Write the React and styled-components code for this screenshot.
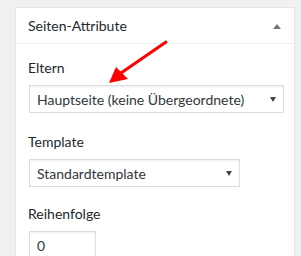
import React from "react";
import styled, { createGlobalStyle } from "styled-components";

const Global = createGlobalStyle`
  html, body { margin: 0; padding: 0; background: #f1f1f1; }
  body { font-family: Lato, "Open Sans", sans-serif; color: #23282d; }
`;

const Page = styled.div`
  position: relative;
  padding: 7px 0 0 15px;
  height: 256px;
  box-sizing: border-box;
  overflow: hidden;
`;

const Box = styled.div`
  width: 280px;
  box-sizing: border-box;
  background: #fff;
  border: 1px solid #e5e5e5;
  box-shadow: 0 1px 1px rgba(0, 0, 0, 0.04);
  height: 260px;
`;

const Header = styled.div`
  display: flex;
  align-items: center;
  justify-content: space-between;
  height: 35px;
  padding: 0 13px 0 12px;
  border-bottom: 1px solid #eee;
`;

const Title = styled.h2`
  margin: 0;
  font-size: 14px;
  font-weight: 400;
  line-height: 1.4;
  color: #23282d;
`;

const Toggle = styled.span`
  width: 0;
  height: 0;
  border-left: 4px solid transparent;
  border-right: 4px solid transparent;
  border-bottom: 5px solid #72777c;
  margin-top: 1px;
`;

const Body = styled.div`
  display: flex;
  flex-direction: column;
  padding: 14px 12px 0 12px;
`;

const Label = styled.label`
  font-size: 14px;
  line-height: 20px;
  color: #23282d;
  margin-bottom: ${(p) => p.$mb || 7}px;
`;

const SelectBox = styled.div`
  display: flex;
  align-items: center;
  justify-content: space-between;
  box-sizing: border-box;
  width: ${(p) => p.$w}px;
  height: 28px;
  margin-left: 1px;
  padding: 0 7px 0 7px;
  border: 1px solid #ddd;
  box-shadow: inset 0 1px 2px rgba(0, 0, 0, 0.07);
  background: #fff;
  font-size: 14px;
  color: #32373c;
  margin-bottom: ${(p) => p.$mb || 0}px;
`;

const Caret = styled.span`
  width: 0;
  height: 0;
  border-left: 3px solid transparent;
  border-right: 3px solid transparent;
  border-top: 5px solid #444;
  margin-right: ${(p) => p.$mr || 0}px;
`;

const Input = styled.div`
  box-sizing: border-box;
  width: 67px;
  height: 28px;
  margin-left: 1px;
  padding: 0 7px;
  display: flex;
  align-items: center;
  border: 1px solid #ddd;
  box-shadow: inset 0 1px 2px rgba(0, 0, 0, 0.07);
  font-size: 14px;
  color: #32373c;
`;

const Overlay = styled.svg`
  position: absolute;
  left: 0;
  top: 0;
  pointer-events: none;
`;

export default function App() {
  return (
    <>
      <Global />
      <Page>
        <Box>
          <Header>
            <Title>Seiten-Attribute</Title>
            <Toggle />
          </Header>
          <Body>
            <Label>Eltern</Label>
            <SelectBox $w={255} $mb={19}>
              <span>Hauptseite (keine Übergeordnete)</span>
              <Caret $mr={0} />
            </SelectBox>
            <Label>Template</Label>
            <SelectBox $w={211} $mb={17}>
              <span>Standardtemplate</span>
              <Caret />
            </SelectBox>
            <Label>Reihenfolge</Label>
            <Input>0</Input>
          </Body>
        </Box>
        <Overlay width="301" height="256" viewBox="0 0 301 256">
          <line x1="166" y1="42" x2="121" y2="73" stroke="#ff0000" strokeWidth="3" strokeLinecap="round" />
          <polygon points="109,83 116,67 128,79" fill="#ff0000" />
        </Overlay>
      </Page>
    </>
  );
}
